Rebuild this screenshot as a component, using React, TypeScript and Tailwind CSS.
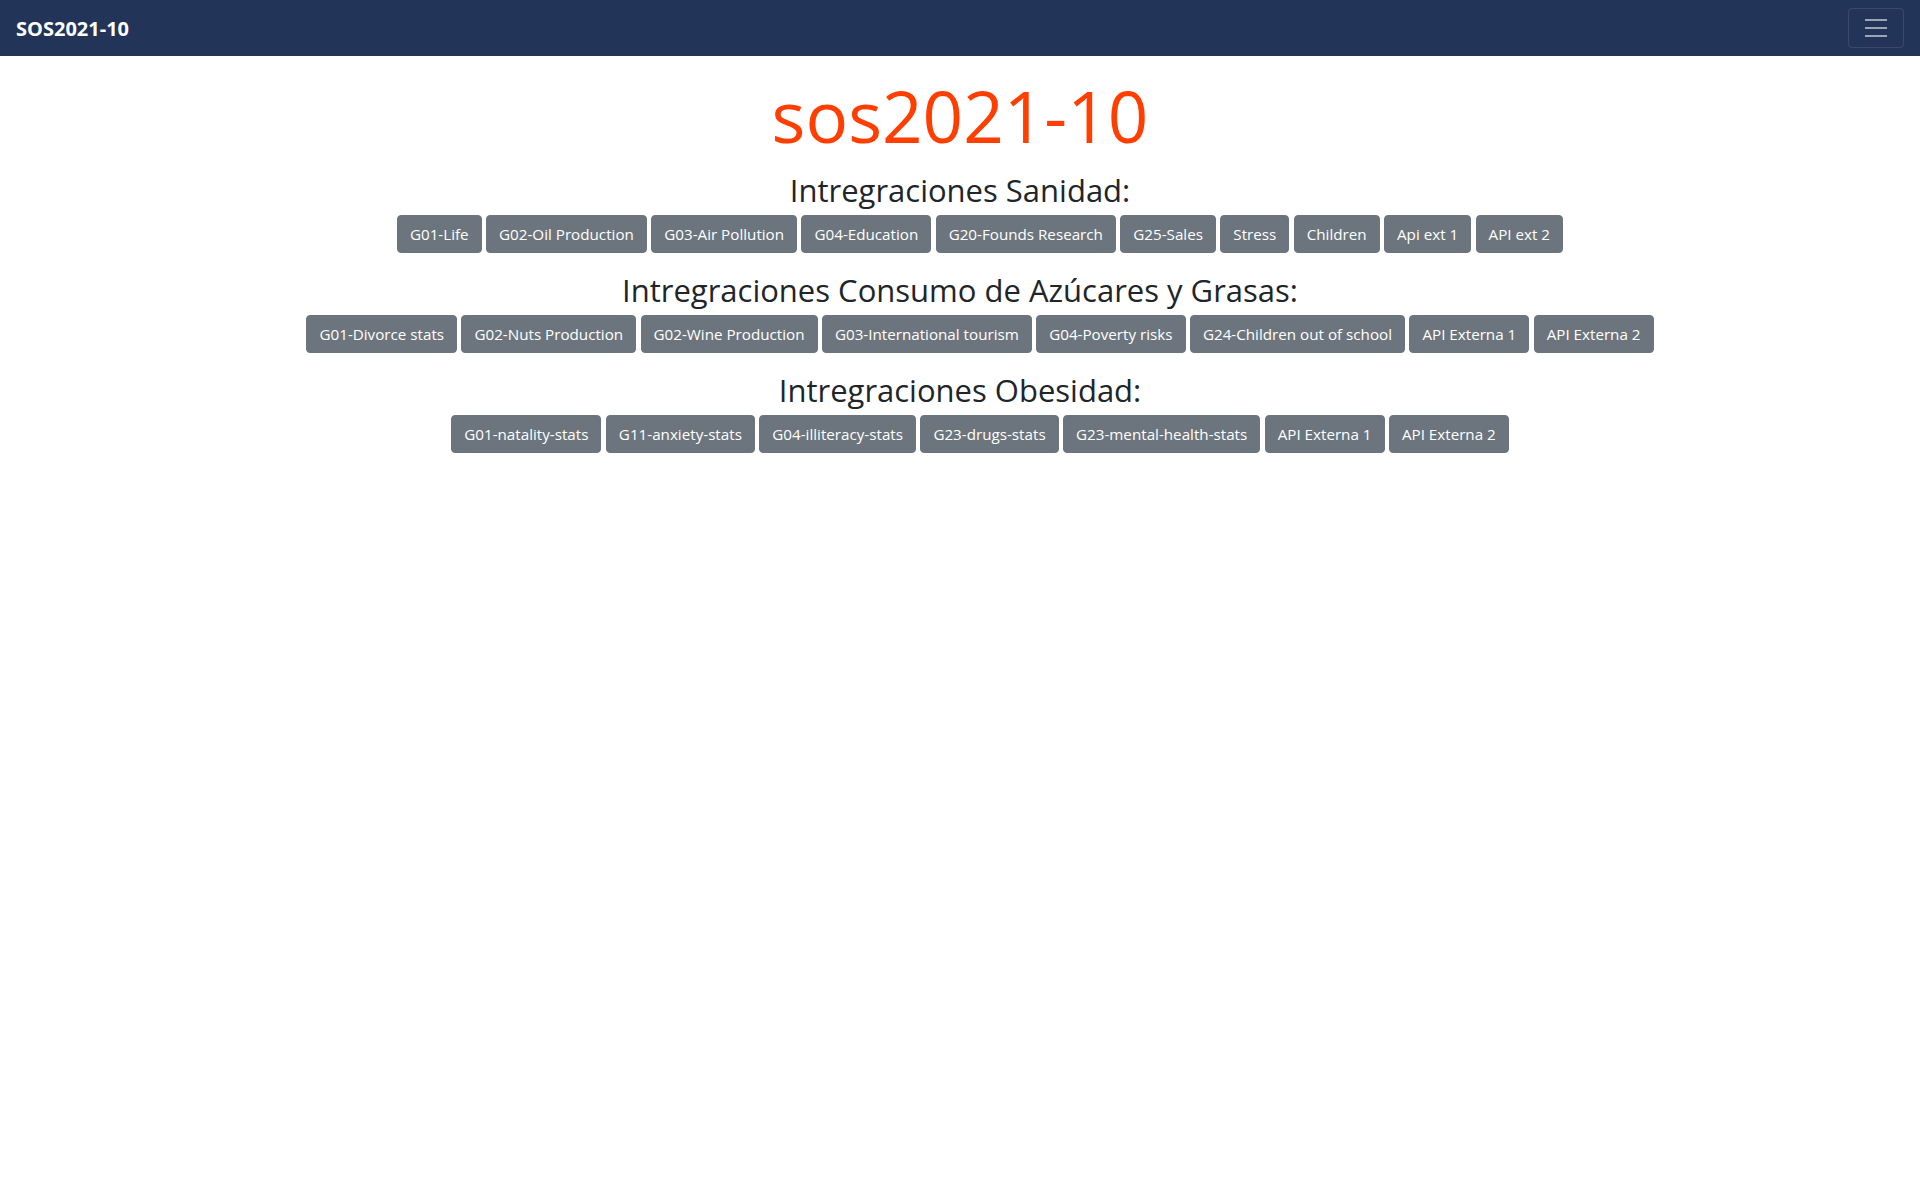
import React from "react";

const sections: { title: string; items: string[] }[] = [
  {
    title: "Intregraciones Sanidad:",
    items: [
      "G01-Life",
      "G02-Oil Production",
      "G03-Air Pollution",
      "G04-Education",
      "G20-Founds Research",
      "G25-Sales",
      "Stress",
      "Children",
      "Api ext 1",
      "API ext 2",
    ],
  },
  {
    title: "Intregraciones Consumo de Azúcares y Grasas:",
    items: [
      "G01-Divorce stats",
      "G02-Nuts Production",
      "G02-Wine Production",
      "G03-International tourism",
      "G04-Poverty risks",
      "G24-Children out of school",
      "API Externa 1",
      "API Externa 2",
    ],
  },
  {
    title: "Intregraciones Obesidad:",
    items: [
      "G01-natality-stats",
      "G11-anxiety-stats",
      "G04-illiteracy-stats",
      "G23-drugs-stats",
      "G23-mental-health-stats",
      "API Externa 1",
      "API Externa 2",
    ],
  },
];

export default function App() {
  return (
    <div className="min-h-screen bg-white font-['Open_Sans',sans-serif]">
      <nav className="flex h-[56px] items-center justify-between bg-[#233459] pl-4 pr-4">
        <span className="pt-px text-[20px] font-bold leading-[30px] text-white">SOS2021-10</span>
        <button className="flex h-[40px] w-[56px] items-center justify-center rounded-[4px] border border-[rgba(255,255,255,0.1)]">
          <svg width="30" height="30" viewBox="0 0 30 30">
            <path
              d="M4 7h22M4 15h22M4 23h22"
              stroke="rgba(255,255,255,0.55)"
              strokeWidth="2"
              strokeLinecap="butt"
            />
          </svg>
        </button>
      </nav>
      <main className="flex flex-col items-center">
        <h1 className="mt-[18px] text-[71px] font-normal leading-[84px] text-[#ff3e00]">sos2021-10</h1>
        <div className="mt-[13px] flex w-full flex-col gap-[18px]">
          {sections.map((s) => (
            <section key={s.title} className="flex flex-col items-center">
              <h2 className="mb-[6px] text-[31px] font-normal leading-[38px] text-[#212529]">{s.title}</h2>
              <div className="flex w-full justify-center gap-[4.4px] pl-10">
                {s.items.map((it, i) => (
                  <button
                    key={i}
                    className="rounded-[4px] border border-[#6c757d] bg-[#6c757d] px-3 py-[6px] text-[15.2px] leading-[24px] whitespace-nowrap text-white"
                  >
                    {it}
                  </button>
                ))}
              </div>
            </section>
          ))}
        </div>
      </main>
    </div>
  );
}
